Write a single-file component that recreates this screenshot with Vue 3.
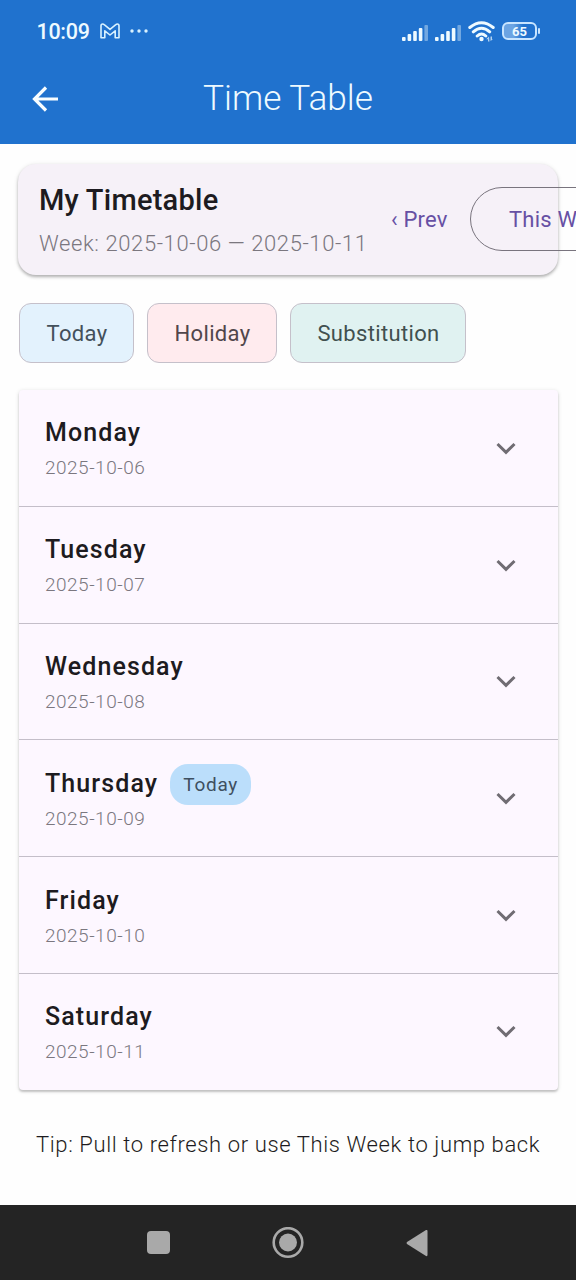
<script setup>
const days = [
  { name: 'Monday', date: '2025-10-06' },
  { name: 'Tuesday', date: '2025-10-07' },
  { name: 'Wednesday', date: '2025-10-08' },
  { name: 'Thursday', date: '2025-10-09', today: true },
  { name: 'Friday', date: '2025-10-10' },
  { name: 'Saturday', date: '2025-10-11' },
]
const bars = [
  { x: 0, y: 14, h: 4 },
  { x: 5.6, y: 11, h: 7 },
  { x: 11.2, y: 8, h: 10 },
  { x: 16.8, y: 5, h: 13 },
  { x: 22.4, y: 2, h: 16 },
]
</script>

<template>
  <div class="screen">
    <header class="top">
      <div class="status">
        <span class="clock">10:09</span>
        <svg class="mail" width="20" height="16" viewBox="0 0 20 16">
          <path d="M1 2.8Q1 1 2.7 1Q3.4 1 4.2 1.7L10 6.4L15.8 1.7Q16.6 1 17.3 1Q19 1 19 2.8V14.8H15.2V7.8L10 12L4.8 7.8V14.8H1Z" />
        </svg>
        <svg class="dots" width="18" height="4" viewBox="0 0 18 4">
          <circle cx="2" cy="2" r="1.7" /><circle cx="9" cy="2" r="1.7" /><circle cx="16" cy="2" r="1.7" />
        </svg>
        <span class="grow"></span>
        <svg v-for="n in 2" :key="n" class="signal" width="26" height="19" viewBox="0 0 26 19">
          <rect v-for="(b, i) in bars" :key="i" :x="b.x" :y="b.y" width="3.6" :height="b.h" rx="1" :opacity="i === 4 ? 0.4 : 1" />
        </svg>
        <svg class="wifi" width="27" height="21" viewBox="0 0 27 21">
          <path d="M1.8 6.5Q13.5-3 25.2 6.5M5.3 10.8Q13.5 3.6 21.7 10.8M9.2 15Q13.5 11 17.8 15" />
          <circle cx="13.5" cy="18" r="2.2" />
          <path class="flow" d="M21 15.5L18.2 18.2H20V20.5H21.5ZM22.5 20V15.5H24V18.2H25Z" />
        </svg>
        <span class="battery"><span class="cell">65</span><i></i></span>
      </div>
      <div class="bar">
        <svg class="back" width="28" height="28" viewBox="0 0 28 28">
          <path d="M27 14H4M15 2.5L3.5 14L15 25.5" />
        </svg>
        <h1>Time Table</h1>
      </div>
    </header>

    <main>
      <section class="card">
        <div class="info">
          <h2>My Timetable</h2>
          <p>Week: 2025-10-06 — 2025-10-11</p>
        </div>
        <button class="prev">‹ Prev</button>
        <button class="this">This Week</button>
      </section>

      <div class="chips">
        <span class="chip blue">Today</span>
        <span class="chip red">Holiday</span>
        <span class="chip teal">Substitution</span>
      </div>

      <section class="days">
        <article v-for="d in days" :key="d.name">
          <div>
            <h3>{{ d.name }}<span v-if="d.today" class="badge">Today</span></h3>
            <p>{{ d.date }}</p>
          </div>
          <svg width="20" height="13" viewBox="0 0 20 13"><path d="M1.5 2L10 10.4L18.5 2" /></svg>
        </article>
      </section>

      <p class="tip">Tip: Pull to refresh or use This Week to jump back</p>
    </main>

    <nav>
      <svg width="24" height="24" viewBox="0 0 24 24"><rect width="23" height="23" rx="4" /></svg>
      <svg width="32" height="32" viewBox="0 0 32 32"><circle cx="16" cy="15.5" r="14.3" class="ring" /><circle cx="16" cy="15.5" r="9" /></svg>
      <svg width="22" height="28" viewBox="0 0 22 28"><path d="M1 13L20 1Q21.5 .5 21.5 2V26Q21.5 27.5 20 27L1 15Q0 14 1 13Z" /></svg>
    </nav>
  </div>
</template>

<style>
body { margin: 0; background: #fff; }
</style>

<style scoped>
* { box-sizing: border-box; }
h1, h2, h3, p { margin: 0; white-space: nowrap; }
svg { display: block; flex: none; }
.screen {
  width: 576px; height: 1280px; overflow: hidden; display: flex; flex-direction: column;
  font-family: Roboto, "Noto Sans", sans-serif; background: #fefefe; color: #1d1b20;
}
.top { height: 144px; background: #2072ce; color: #eefaff; flex: none; }
.status { height: 62px; display: flex; align-items: center; padding: 0 36px 0 36px; }
.clock { font-size: 21.5px; font-weight: 500; line-height: 24px; width: 64px; padding: 2px 0 0 .5px; letter-spacing: -.3px; }
.mail { fill: none; stroke: #d9f2ff; stroke-width: 1.6; stroke-linejoin: round; }
.dots { fill: #d9f2ff; margin-left: 10px; }
.grow { flex: 1; }
.signal { fill: #eefaff; margin: 2px 7px 0 0; }
.wifi { fill: none; stroke: #eefaff; stroke-width: 3; stroke-linecap: round; margin-right: 7px; }
.wifi circle, .wifi .flow { fill: #eefaff; stroke: none; }
.wifi .flow { opacity: .7; }
.battery { display: flex; align-items: center; }
.cell {
  width: 35px; height: 18px; border: 2px solid #c8e5ff; border-radius: 6px; font-size: 13px; font-weight: 700;
  line-height: 15px; text-align: center; background: linear-gradient(90deg, #6ba4e3 30%, transparent 62%);
}
.battery i { width: 2px; height: 6px; background: #c8e5ff; margin-left: 1px; border-radius: 1px; }
.bar { height: 74px; display: grid; grid-template-columns: 58px 1fr 58px; align-items: center; }
.back { margin-left: 31px; fill: none; stroke: #f8fdff; stroke-width: 3.2; }
h1 { font-size: 35.2px; font-weight: 300; text-align: center; line-height: 42px; padding-bottom: 2px; }
main { flex: 1; padding: 20px 18px 0; }
.card {
  height: 111px; border-radius: 18px; background: #f6f1f8; padding: 0 21px; display: flex; align-items: center;
  box-shadow: 0 2px 3px rgba(0, 0, 0, .24), 0 1px 5px rgba(0, 0, 0, .12);
}
.info { width: 352px; flex: none; padding-top: 2px; }
h2 { font-size: 29px; font-weight: 500; line-height: 34px; letter-spacing: .25px; }
.info p { font-size: 22px; font-weight: 300; line-height: 28px; margin-top: 13px; color: #7b777f; letter-spacing: .6px; }
button { font: 400 22px/26px Roboto, sans-serif; color: #6750a4; background: none; border: 0; padding: 0; white-space: nowrap; flex: none; text-align: left; letter-spacing: .2px; }
.prev { width: 79px; }
.this { width: 180px; height: 64px; border: 1.5px solid #79747e; border-radius: 32px; padding: 2px 0 0 38px; margin-bottom: 1px; }
.chips { display: flex; gap: 13px; margin: 28px 1px 0; }
.chip {
  height: 60px; border: 1.5px solid #c5c0ca; border-radius: 12px; display: grid; place-items: center;
  font-size: 22px; line-height: 26px; letter-spacing: .35px; color: #48464c; padding: 2px 0 0 1px;
}
.blue { width: 115px; background: #e3f2fd; color: #43505b; }
.red { width: 130px; background: #ffebee; color: #51464b; }
.teal { width: 176px; background: #e0f2f1; color: #41504f; }
.days {
  margin: 27px .5px 0; height: 700px; background: #fdf7ff; border-radius: 4px;
  display: grid; grid-template-rows: repeat(5, 116.8px) 1fr;
  box-shadow: 0 2px 2px rgba(0, 0, 0, .16), 0 1px 4px rgba(0, 0, 0, .15);
}
article { display: flex; justify-content: space-between; align-items: center; padding: 1px 42px 0 26.5px; border-bottom: 1px solid #c4bec9; }
article:last-child { border-color: transparent; }
h3 { display: flex; align-items: center; font-size: 25px; font-weight: 500; height: 30px; line-height: 30px; letter-spacing: 1.1px; }
article div { padding-top: 2px; }
article p { font-size: 19px; font-weight: 300; line-height: 24px; margin-top: 8px; color: #7b777f; letter-spacing: .5px; }
article svg { fill: none; stroke: #706c73; stroke-width: 3; }
.badge { margin: 1px 0 0 12px; width: 81px; height: 41px; border-radius: 18px; background: #bbdefb; color: #3e4f60; font-size: 19px; font-weight: 400; line-height: 41px; text-align: center; letter-spacing: .7px; }
.tip { font-size: 22px; font-weight: 300; line-height: 28px; margin: 41px 0 0 18px; letter-spacing: .62px; }
nav { height: 75px; flex: none; background: #242424; display: flex; align-items: center; padding-left: 147px; fill: #a9a9a9; }
nav svg:nth-child(2) { margin: 0 102px 0 101px; }
.ring { fill: none; stroke: #a9a9a9; stroke-width: 2.6; }
</style>
